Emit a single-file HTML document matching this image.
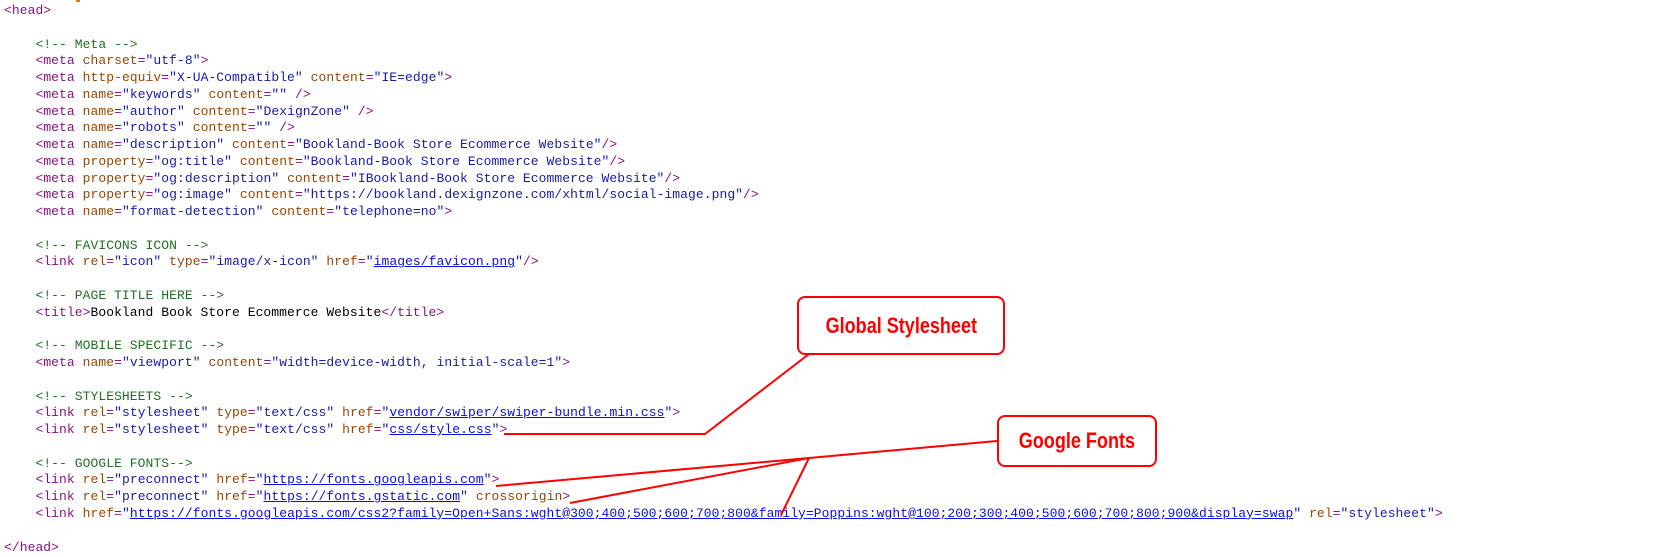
<!DOCTYPE html>
<html><head><meta charset="utf-8"><style>
html,body{margin:0;padding:0;background:#fff;width:1655px;height:557px;overflow:hidden;position:relative}
pre{margin:0;position:absolute;left:4px;top:3px;font-family:"Liberation Mono",monospace;font-size:13px;letter-spacing:0.06px;line-height:16.77px;color:#000}
.t{color:#881280}.a{color:#994500}.v{color:#1a1aa6}.c{color:#236e25}.u{color:#0d0dd9;text-decoration:underline}
.box{position:absolute;border:2px solid #f00;border-radius:8px;background:#fff;color:#f00;font-family:"Liberation Sans",sans-serif;font-weight:bold;font-size:22px;display:flex;align-items:center;justify-content:center;box-sizing:border-box}
.box span{display:inline-block;transform:scaleX(0.82);white-space:nowrap}
svg{position:absolute;left:0;top:0}
</style></head><body>
<div style="position:absolute;left:76px;top:0;width:4px;height:2px;background:#d07a20"></div>
<pre><span class="t">&lt;head&gt;</span>

    <span class="c">&lt;!-- Meta --&gt;</span>
    <span class="t">&lt;meta</span> <span class="a">charset</span><span class="t">=</span><span class="v">"utf-8"</span><span class="t">&gt;</span>
    <span class="t">&lt;meta</span> <span class="a">http-equiv</span><span class="t">=</span><span class="v">"X-UA-Compatible"</span> <span class="a">content</span><span class="t">=</span><span class="v">"IE=edge"</span><span class="t">&gt;</span>
    <span class="t">&lt;meta</span> <span class="a">name</span><span class="t">=</span><span class="v">"keywords"</span> <span class="a">content</span><span class="t">=</span><span class="v">""</span> <span class="t">/&gt;</span>
    <span class="t">&lt;meta</span> <span class="a">name</span><span class="t">=</span><span class="v">"author"</span> <span class="a">content</span><span class="t">=</span><span class="v">"DexignZone"</span> <span class="t">/&gt;</span>
    <span class="t">&lt;meta</span> <span class="a">name</span><span class="t">=</span><span class="v">"robots"</span> <span class="a">content</span><span class="t">=</span><span class="v">""</span> <span class="t">/&gt;</span>
    <span class="t">&lt;meta</span> <span class="a">name</span><span class="t">=</span><span class="v">"description"</span> <span class="a">content</span><span class="t">=</span><span class="v">"Bookland-Book Store Ecommerce Website"</span><span class="t">/&gt;</span>
    <span class="t">&lt;meta</span> <span class="a">property</span><span class="t">=</span><span class="v">"og:title"</span> <span class="a">content</span><span class="t">=</span><span class="v">"Bookland-Book Store Ecommerce Website"</span><span class="t">/&gt;</span>
    <span class="t">&lt;meta</span> <span class="a">property</span><span class="t">=</span><span class="v">"og:description"</span> <span class="a">content</span><span class="t">=</span><span class="v">"IBookland-Book Store Ecommerce Website"</span><span class="t">/&gt;</span>
    <span class="t">&lt;meta</span> <span class="a">property</span><span class="t">=</span><span class="v">"og:image"</span> <span class="a">content</span><span class="t">=</span><span class="v">"https://bookland.dexignzone.com/xhtml/social-image.png"</span><span class="t">/&gt;</span>
    <span class="t">&lt;meta</span> <span class="a">name</span><span class="t">=</span><span class="v">"format-detection"</span> <span class="a">content</span><span class="t">=</span><span class="v">"telephone=no"</span><span class="t">&gt;</span>

    <span class="c">&lt;!-- FAVICONS ICON --&gt;</span>
    <span class="t">&lt;link</span> <span class="a">rel</span><span class="t">=</span><span class="v">"icon"</span> <span class="a">type</span><span class="t">=</span><span class="v">"image/x-icon"</span> <span class="a">href</span><span class="t">=</span><span class="v">"</span><span class="u">images/favicon.png</span><span class="v">"</span><span class="t">/&gt;</span>

    <span class="c">&lt;!-- PAGE TITLE HERE --&gt;</span>
    <span class="t">&lt;title&gt;</span>Bookland Book Store Ecommerce Website<span class="t">&lt;/title&gt;</span>

    <span class="c">&lt;!-- MOBILE SPECIFIC --&gt;</span>
    <span class="t">&lt;meta</span> <span class="a">name</span><span class="t">=</span><span class="v">"viewport"</span> <span class="a">content</span><span class="t">=</span><span class="v">"width=device-width, initial-scale=1"</span><span class="t">&gt;</span>

    <span class="c">&lt;!-- STYLESHEETS --&gt;</span>
    <span class="t">&lt;link</span> <span class="a">rel</span><span class="t">=</span><span class="v">"stylesheet"</span> <span class="a">type</span><span class="t">=</span><span class="v">"text/css"</span> <span class="a">href</span><span class="t">=</span><span class="v">"</span><span class="u">vendor/swiper/swiper-bundle.min.css</span><span class="v">"</span><span class="t">&gt;</span>
    <span class="t">&lt;link</span> <span class="a">rel</span><span class="t">=</span><span class="v">"stylesheet"</span> <span class="a">type</span><span class="t">=</span><span class="v">"text/css"</span> <span class="a">href</span><span class="t">=</span><span class="v">"</span><span class="u">css/style.css</span><span class="v">"</span><span class="t">&gt;</span>

    <span class="c">&lt;!-- GOOGLE FONTS--&gt;</span>
    <span class="t">&lt;link</span> <span class="a">rel</span><span class="t">=</span><span class="v">"preconnect"</span> <span class="a">href</span><span class="t">=</span><span class="v">"</span><span class="u">https://fonts.googleapis.com</span><span class="v">"</span><span class="t">&gt;</span>
    <span class="t">&lt;link</span> <span class="a">rel</span><span class="t">=</span><span class="v">"preconnect"</span> <span class="a">href</span><span class="t">=</span><span class="v">"</span><span class="u">https://fonts.gstatic.com</span><span class="v">"</span> <span class="a">crossorigin</span><span class="t">&gt;</span>
    <span class="t">&lt;link</span> <span class="a">href</span><span class="t">=</span><span class="v">"</span><span class="u">https://fonts.googleapis.com/css2?family=Open+Sans:wght@300;400;500;600;700;800&amp;family=Poppins:wght@100;200;300;400;500;600;700;800;900&amp;display=swap</span><span class="v">"</span> <span class="a">rel</span><span class="t">=</span><span class="v">"stylesheet"</span><span class="t">&gt;</span>

<span class="t">&lt;/head&gt;</span></pre>
<svg width="1655" height="557" viewBox="0 0 1655 557">
<g stroke="#f00" stroke-width="2" fill="none">
<polyline points="504,434 705,434 809,354"/>
<line x1="997" y1="441" x2="809" y2="458"/>
<line x1="809" y1="458" x2="496" y2="486"/>
<line x1="809" y1="458" x2="570" y2="503"/>
<line x1="809" y1="458" x2="781" y2="515"/>
</g>
</svg>
<div class="box" style="left:797px;top:296px;width:208px;height:59px"><span>Global Stylesheet</span></div>
<div class="box" style="left:997px;top:415px;width:160px;height:52px"><span>Google Fonts</span></div>
</body></html>
